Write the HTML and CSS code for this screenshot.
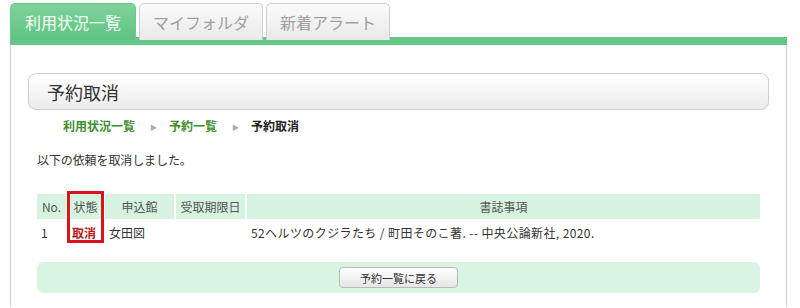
FILE: index.html
```html
<!DOCTYPE html>
<html lang="ja">
<head>
    <meta charset="UTF-8">
    <meta name="viewport" content="width=device-width, initial-scale=1.0">
    <title>予約取消</title>
    <link rel="stylesheet" href="styles.css">
</head>
<body>
    <!-- Tabs -->
    <nav class="tabs">
        <a class="tab active" href="#">利用状況一覧</a>
        <a class="tab" href="#">マイフォルダ</a>
        <a class="tab" href="#">新着アラート</a>
    </nav>
    <div class="tab-line"></div>

    <main class="panel">
        <h1 class="page-title">予約取消</h1>

        <div class="content">
            <ul class="breadcrumb">
                <li><a href="#">利用状況一覧</a></li>
                <li><a href="#">予約一覧</a></li>
                <li class="current">予約取消</li>
            </ul>

            <p class="message">以下の依頼を取消しました。</p>

            <div class="table-wrap">
                <table class="result-table">
                    <thead>
                        <tr>
                            <th class="col-no">No.</th>
                            <th class="col-status">状態</th>
                            <th class="col-lib">申込館</th>
                            <th class="col-limit">受取期限日</th>
                            <th>書誌事項</th>
                        </tr>
                    </thead>
                    <tbody>
                        <tr>
                            <td>1</td>
                            <td class="status-cancel">取消</td>
                            <td>女田図</td>
                            <td></td>
                            <td class="biblio">52ヘルツのクジラたち / 町田そのこ著. -- 中央公論新社, 2020.</td>
                        </tr>
                    </tbody>
                </table>
                <!-- highlight box drawn over the status column -->
                <div class="highlight"></div>
            </div>

            <div class="button-bar">
                <button type="button" class="btn">予約一覧に戻る</button>
            </div>
        </div>
    </main>
</body>
</html>
```

FILE: styles.css
```css
/* base */
body {
    margin: 0;
    font-family: "Noto Sans CJK JP", "Liberation Sans", sans-serif;
    font-size: 12px;
    color: #333;
    background-color: white;
}

a {
    text-decoration: none;
}

/* tabs */
.tabs {
    display: flex;
    gap: 3px;
    padding: 3px 0 0 10px;
    height: 37px;
    box-sizing: border-box;
}

.tab {
    width: 124px;
    height: 37px;
    box-sizing: border-box;
    display: flex;
    align-items: center;
    justify-content: center;
    font-size: 16px;
    color: #a0a0a0;
    background: linear-gradient(#fbfbfb, #e9e9e9);
    border: 1px solid #d0d0d0;
    border-bottom: none;
    border-radius: 5px 5px 0 0;
}

.tab.active {
    width: 126px;
    color: #f4fff6;
    background: linear-gradient(#7fd29a, #5fc483);
    border-color: #6ccb8c;
}

.tab-line {
    height: 8px;
    margin: 0 13px 0 10px;
    background-color: #64c787;
}

/* panel */
.panel {
    margin: 0 13px 0 10px;
    border-left: 1px solid #d2d2d2;
    border-right: 1px solid #d2d2d2;
    padding: 28px 17px 14px 17px;
}

.page-title {
    margin: 0;
    height: 37px;
    box-sizing: border-box;
    padding-left: 18px;
    display: flex;
    align-items: center;
    font-size: 18px;
    font-weight: normal;
    color: #333;
    background: linear-gradient(#ffffff, #ececec);
    border: 1px solid #cfcfcf;
    border-radius: 8px;
}

.content {
    padding: 0 9px;
}

/* breadcrumb */
.breadcrumb {
    list-style: none;
    display: flex;
    margin: 0;
    padding: 2px 0 0 26px;
    height: 26px;
    align-items: center;
    font-size: 12px;
    font-weight: bold;
}

.breadcrumb li + li::before {
    content: "\25B6";
    font-size: 7px;
    color: #aaa;
    margin: 0 12px 0 15px;
    vertical-align: 1px;
}

.breadcrumb a {
    color: #3f8f2f;
}

.breadcrumb .current {
    color: #222;
}

.message {
    margin: 13px 0 0 0;
    font-size: 12px;
    letter-spacing: -0.1px;
}

/* table */
.table-wrap {
    position: relative;
    margin-top: 26px;
}

.result-table {
    table-layout: fixed;
    border-collapse: separate;
    border-spacing: 2px 0;
    margin: 0 -2px;
    width: calc(100% + 4px);
}

.result-table th,
.result-table td {
    box-sizing: border-box;
    font-size: 12px;
}

.result-table th {
    background-color: #d6f3df;
    color: #555;
    font-weight: normal;
    height: 25px;
    padding: 0;
}

.result-table td {
    height: 25px;
    padding: 1px 0 0 4px;
    text-align: left;
    vertical-align: middle;
}

.col-no {
    width: 29px;
}

.col-status {
    width: 35px;
}

.col-lib {
    width: 69px;
}

.col-limit {
    width: 69px;
}

.status-cancel {
    color: #c01616;
    font-weight: bold;
}

.biblio {
    letter-spacing: 0.4px;
}

.highlight {
    position: absolute;
    left: 30px;
    top: -3px;
    width: 31px;
    height: 46px;
    border: 3px solid #d8141e;
}

/* button bar */
.button-bar {
    margin-top: 18px;
    height: 31px;
    background-color: #d9f5e2;
    border-radius: 6px;
    display: flex;
    align-items: center;
    justify-content: center;
}

.btn {
    width: 119px;
    height: 21px;
    padding: 0;
    font-family: inherit;
    font-size: 11px;
    color: #333;
    background: linear-gradient(#ffffff, #e6e6e6);
    border: 1px solid #b9b9b9;
    border-radius: 4px;
    cursor: pointer;
}
```
